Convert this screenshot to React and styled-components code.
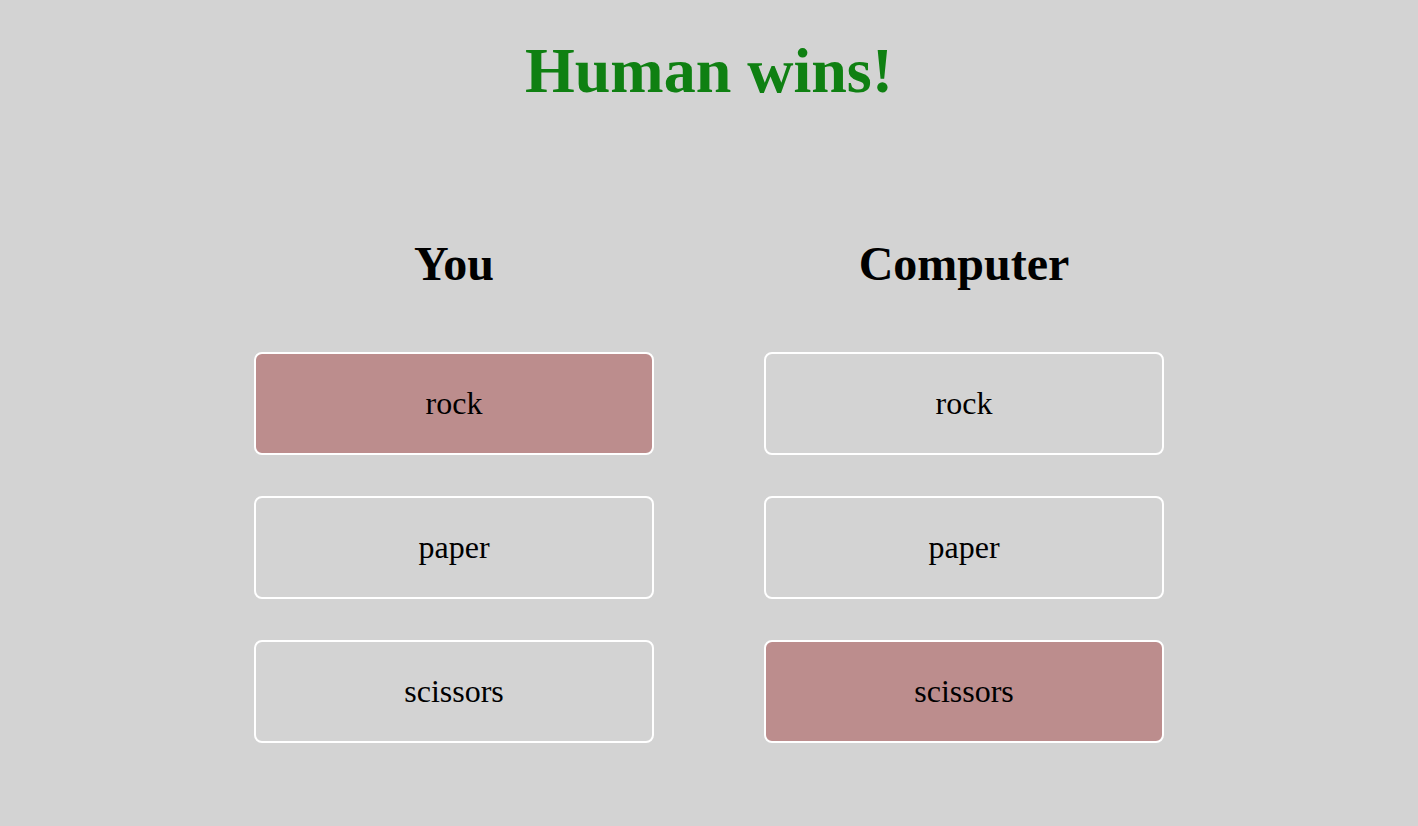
import React from "react";
import styled, { createGlobalStyle } from "styled-components";

const GlobalStyle = createGlobalStyle`
  html, body {
    margin: 0;
    padding: 0;
    background: #d3d3d3;
    font-family: "Liberation Serif", "Times New Roman", serif;
  }
`;

const Page = styled.main`
  min-height: 826px;
  padding-top: 39px;
  box-sizing: border-box;
`;

const Title = styled.h1`
  margin: 0;
  font-size: 64px;
  line-height: 1;
  font-weight: bold;
  text-align: center;
  color: #0f8012;
`;

const Board = styled.section`
  display: grid;
  grid-template-columns: 400px 400px;
  column-gap: 110px;
  justify-content: center;
  margin-top: 137px;
`;

const Column = styled.div`
  display: flex;
  flex-direction: column;
`;

const Heading = styled.h2`
  margin: 0;
  font-size: 48px;
  line-height: 1;
  font-weight: bold;
  text-align: center;
  color: #000;
`;

const Choices = styled.div`
  display: flex;
  flex-direction: column;
  gap: 41px;
  margin-top: 64px;
`;

const Choice = styled.div`
  box-sizing: border-box;
  height: 103px;
  padding-bottom: 2px;
  display: flex;
  align-items: center;
  justify-content: center;
  border: 2px solid #ffffff;
  border-radius: 8px;
  background: ${(p) => (p.$selected ? "#bc8d8d" : "transparent")};
  font-size: 32px;
  line-height: 1;
  color: #000;
`;

const options = ["rock", "paper", "scissors"];

const players = [
  { name: "You", pick: "rock" },
  { name: "Computer", pick: "scissors" },
];

export default function App() {
  return (
    <>
      <GlobalStyle />
      <Page>
        <Title>Human wins!</Title>
        <Board>
          {players.map((pl) => (
            <Column key={pl.name}>
              <Heading>{pl.name}</Heading>
              <Choices>
                {options.map((o) => (
                  <Choice key={o} $selected={o === pl.pick}>
                    {o}
                  </Choice>
                ))}
              </Choices>
            </Column>
          ))}
        </Board>
      </Page>
    </>
  );
}
